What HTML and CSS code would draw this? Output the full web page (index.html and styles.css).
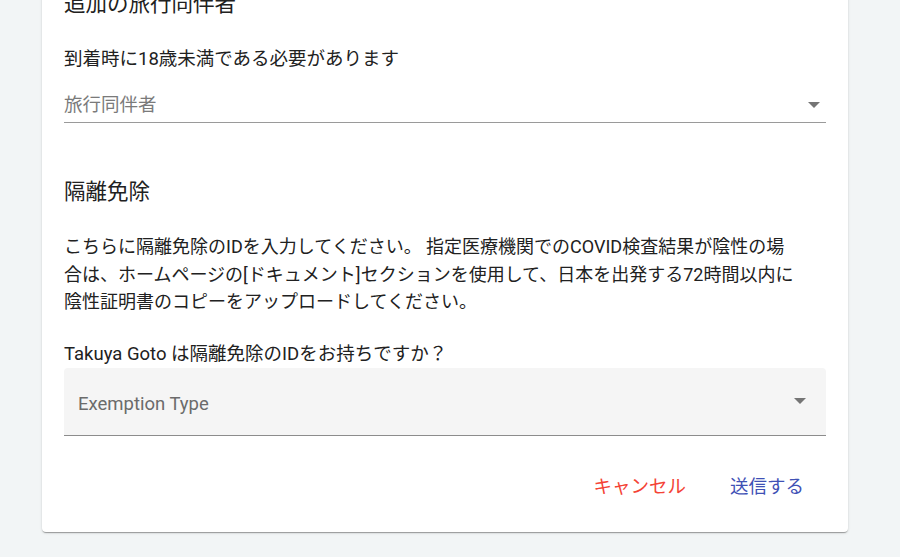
FILE: index.html
```html
<!DOCTYPE html>
<html lang="ja">
<head>
<meta charset="utf-8">
<title>隔離免除</title>
<link rel="stylesheet" href="styles.css">
</head>
<body>
<div class="page">
  <div class="card">
    <h2 class="section-title top-title">追加の旅行同伴者</h2>
    <p class="subtitle">到着時に18歳未満である必要があります</p>
    <div class="select">
      <span class="placeholder">旅行同伴者</span>
      <span class="arrow"></span>
    </div>

    <h2 class="section-title exempt-title">隔離免除</h2>
    <p class="desc">こちらに隔離免除のIDを入力してください。 指定医療機関でのCOVID検査結果が陰性の場合は、ホームページの[ドキュメント]セクションを使用して、日本を出発する72時間以内に陰性証明書のコピーをアップロードしてください。</p>
    <p class="question">Takuya Goto は隔離免除のIDをお持ちですか？</p>
    <div class="filled">
      <span class="filled-label">Exemption Type</span>
      <span class="arrow"></span>
    </div>

    <div class="actions">
      <button class="btn btn-cancel" type="button">キャンセル</button>
      <button class="btn btn-submit" type="button">送信する</button>
    </div>
  </div>
</div>
</body>
</html>
```
FILE: styles.css
```css
* { box-sizing: border-box; }
html, body {
  margin: 0;
  padding: 0;
  background: #f2f5f6;
  height: 100%;
  overflow: hidden;
}
body {
  font-family: Roboto, "Noto Sans CJK JP", sans-serif;
  font-size: 18.5px;
  color: #212121;
}
.page {
  padding-left: 42px;
}
.card {
  width: 806px;
  margin-top: -10px;
  background: #fff;
  border-radius: 0 0 4px 4px;
  box-shadow: 0 2px 1px -1px rgba(0,0,0,.2), 0 1px 1px 0 rgba(0,0,0,.14), 0 1px 3px 0 rgba(0,0,0,.12);
  padding: 0 22px 31px;
}
.section-title {
  margin: 0;
  font-size: 21.5px;
  font-weight: 400;
  line-height: 28px;
  color: #212121;
}
.subtitle {
  margin: 27px 0 0;
  line-height: 28px;
}
.select {
  margin-top: 18px;
  display: flex;
  align-items: center;
  justify-content: space-between;
  line-height: 28px;
  padding-bottom: 3px;
  border-bottom: 1px solid #9a9a9a;
}
.placeholder { color: #7a7a7a; }
.arrow {
  width: 0;
  height: 0;
  border-left: 6px solid transparent;
  border-right: 6px solid transparent;
  border-top: 6px solid #757575;
  margin-right: 6px;
}
.exempt-title { margin-top: 55px; }
.desc {
  margin: 27px 0 0;
  max-width: 735px;
  font-size: 18px;
  line-height: 27.5px;
}
.question {
  margin: 24px 0 0;
  line-height: 28px;
}
.filled {
  display: flex;
  align-items: center;
  justify-content: space-between;
  height: 68px;
  background: #f5f5f5;
  border-radius: 4px 4px 0 0;
  border-bottom: 1px solid #8c8c8c;
  padding: 0 20px 0 14px;
  line-height: 28px;
}
.filled-label { color: #6b6b6b; padding-top: 5px; }
.filled .arrow { margin-right: 0; }
.actions {
  margin-top: 37px;
  display: flex;
  justify-content: flex-end;
}
.btn {
  font: inherit;
  font-size: 18.5px;
  line-height: 28px;
  background: none;
  border: 0;
  padding: 0 22px;
  cursor: pointer;
}
.btn-cancel { color: #f44336; }
.btn-submit { color: #3f51b5; }
```
